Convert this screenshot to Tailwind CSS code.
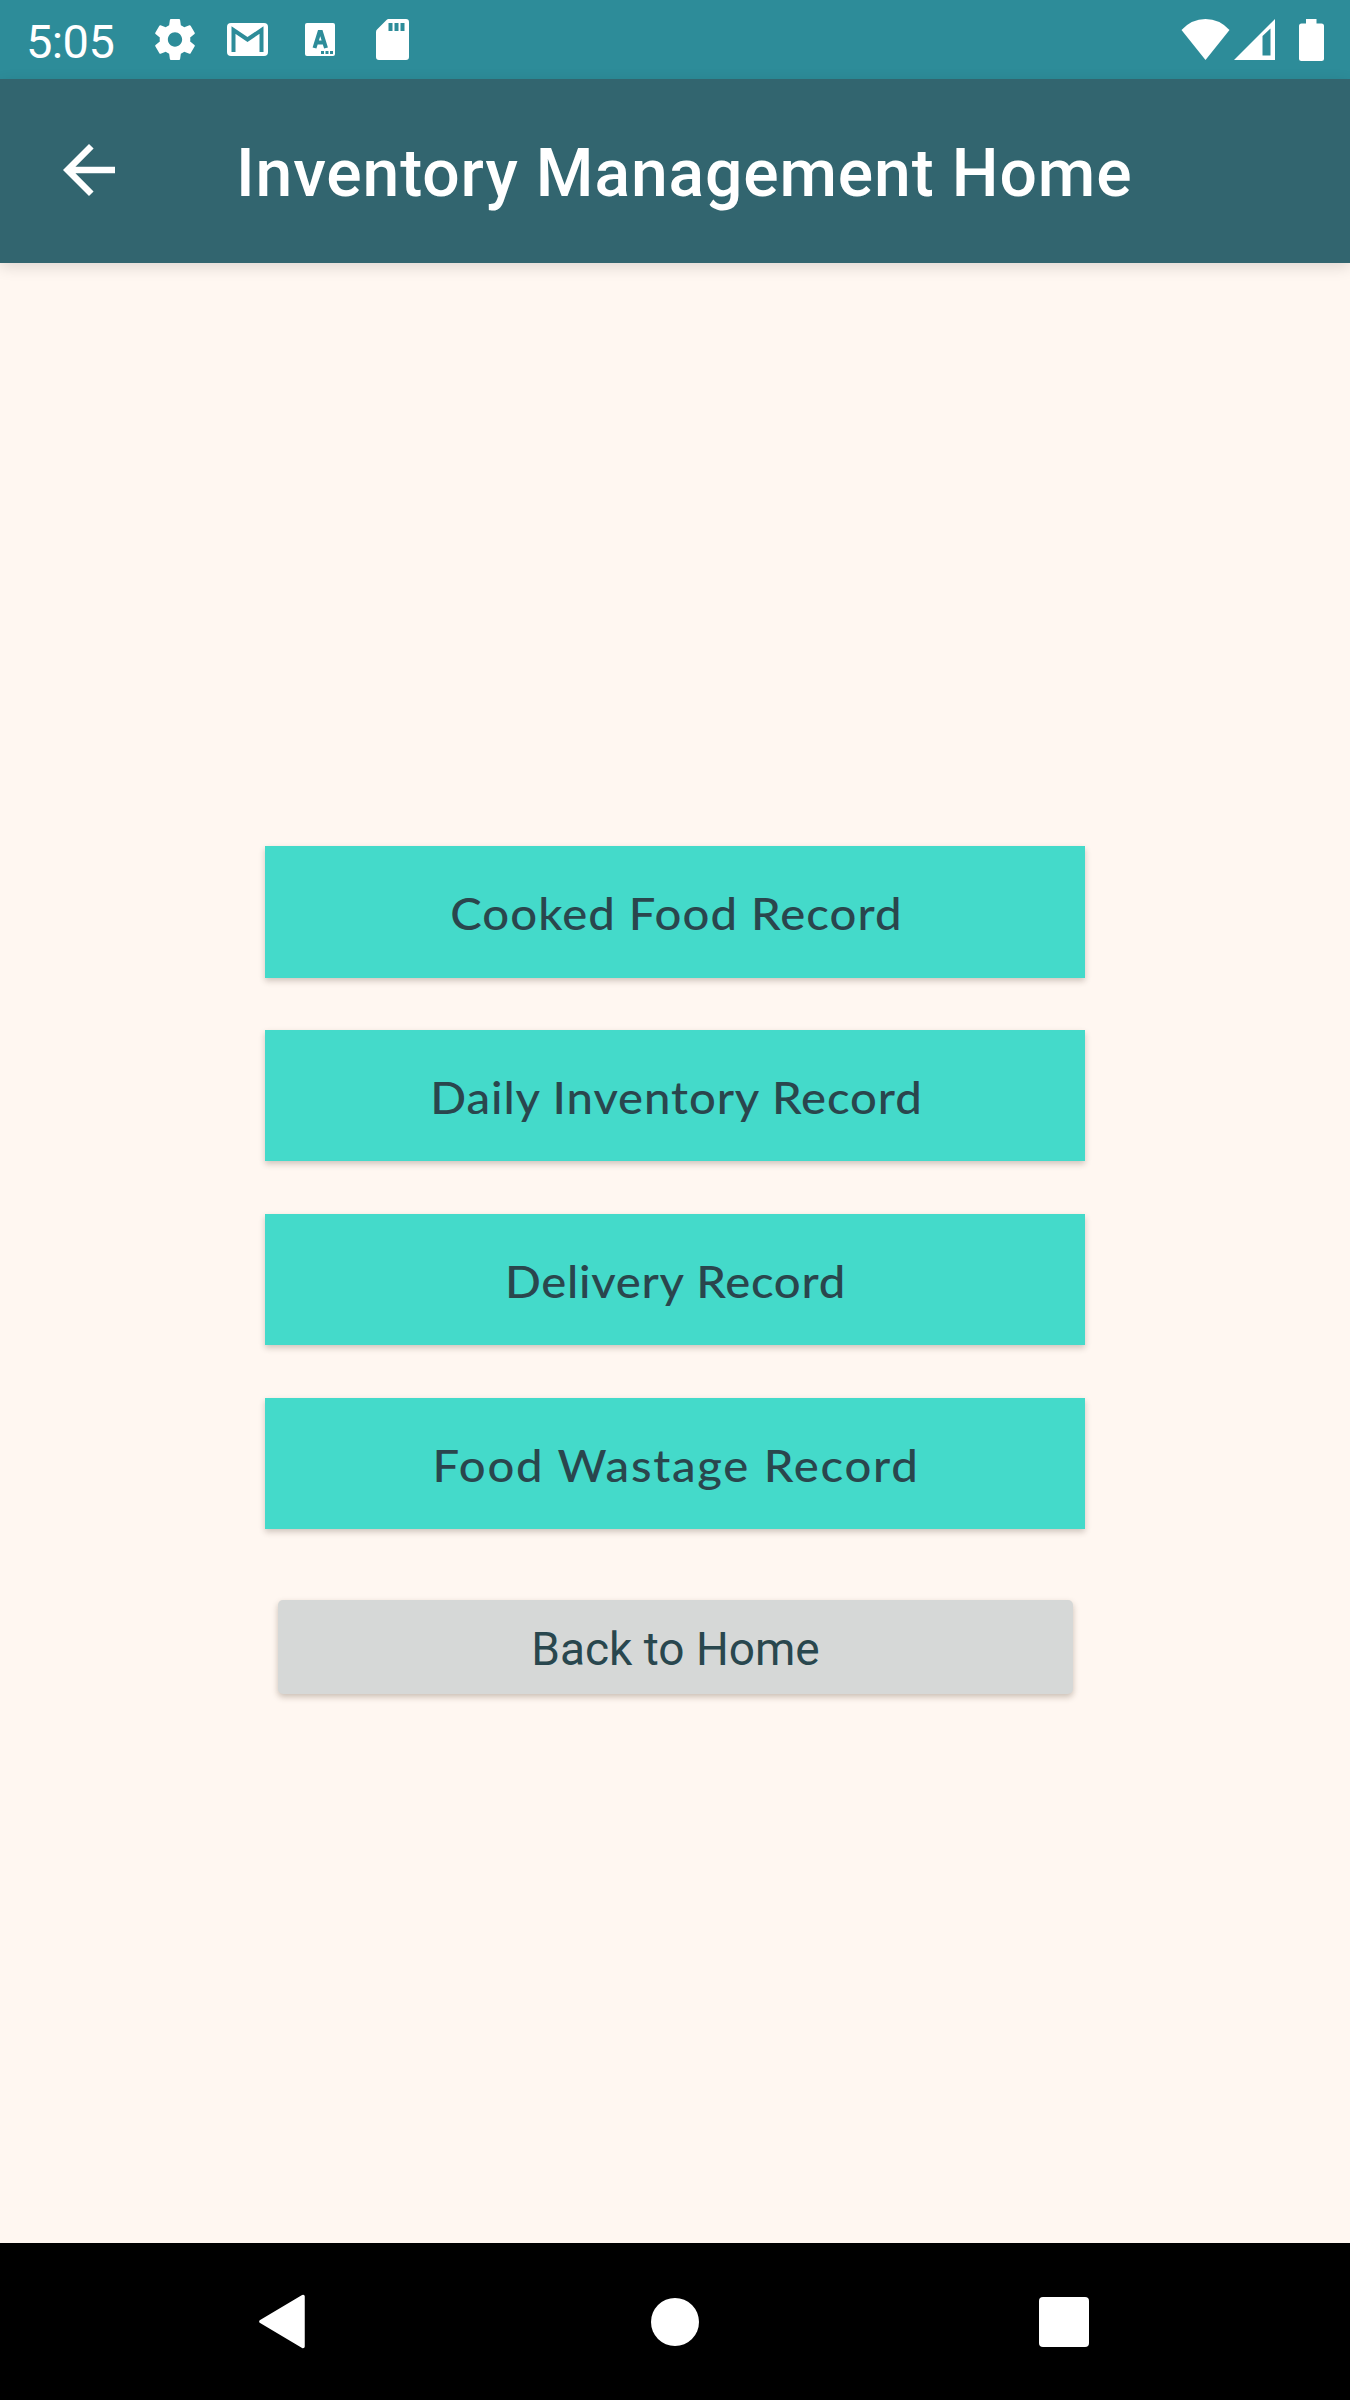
<!DOCTYPE html>
<html lang="en">
<head>
<meta charset="utf-8">
<title>Inventory Management Home</title>
<script src="https://cdn.jsdelivr.net/npm/@tailwindcss/browser@4"></script>
</head>
<body class="bg-[#fff7f1]">
<div class="flex h-[2400px] w-[1350px] flex-col overflow-hidden bg-[#fff7f1] font-[Roboto,sans-serif]">

  <!-- Status bar -->
  <header class="flex h-[79px] shrink-0 items-center bg-[#2d8c99] pr-[26px] pl-[26px] text-white">
    <span class="w-[129px] pt-[3px] text-[47px] leading-none tracking-[-0.6px]">5:05</span>
    <svg class="mr-[32px] h-[41px] w-[40px]" viewBox="2.2 2 19.6 20" preserveAspectRatio="none" fill="currentColor"><path d="M19.43 12.98c.04-.32.07-.64.07-.98s-.03-.66-.07-.98l2.11-1.65c.19-.15.24-.42.12-.64l-2-3.46c-.12-.22-.39-.3-.61-.22l-2.49 1c-.52-.4-1.08-.73-1.69-.98l-.38-2.65C14.46 2.18 14.25 2 14 2h-4c-.25 0-.46.18-.49.42l-.38 2.65c-.61.25-1.17.59-1.69.98l-2.49-1c-.23-.09-.49 0-.61.22l-2 3.46c-.13.22-.07.49.12.64l2.11 1.65c-.04.32-.07.65-.07.98s.03.66.07.98l-2.11 1.65c-.19.15-.24.42-.12.64l2 3.46c.12.22.39.3.61.22l2.49-1c.52.4 1.08.73 1.69.98l.38 2.65c.03.24.24.42.49.42h4c.25 0 .46-.18.49-.42l.38-2.65c.61-.25 1.17-.59 1.69-.98l2.49 1c.23.09.49 0 .61-.22l2-3.46c.12-.22.07-.49-.12-.64l-2.11-1.65zM12 15.5c-1.93 0-3.5-1.57-3.5-3.5s1.57-3.5 3.5-3.5 3.5 1.57 3.5 3.5-1.57 3.5-3.5 3.5z"/></svg>
    <svg class="mr-[37px] h-[33px] w-[41px]" viewBox="0 0 41 33"><rect width="41" height="33" rx="4" fill="#fff"/><path d="M6.500 29V7L20.500 16.500 34.500 7V29" fill="none" stroke="#2d8c99" stroke-width="4"/></svg>
    <svg class="mr-[41px] h-[33px] w-[30px]" viewBox="0 0 30 33"><rect width="30" height="33" rx="2" fill="#fff"/><path d="M9.500 25L14.500 9H16L21 25M11 19.500H19.500" fill="none" stroke="#2d8c99" stroke-width="4"/><path d="M16 28h3v3h-3zM20.500 28h3v3h-3zM25 28h3v3h-3z" fill="#2d8c99"/></svg>
    <svg class="h-[41px] w-[33px]" viewBox="0 0 33 41"><path d="M12.500 0H30q3 0 3 3V38q0 3-3 3H3q-3 0-3-3V13Q0 11 1.500 10L10.500 1Q11.500 0 12.500 0Z" fill="#fff"/><path d="M12.500 4h4v8h-4zM18.500 4h4v8h-4zM24.500 4h4v8h-4z" fill="#2d8c99"/></svg>
    <svg class="ml-auto h-[41px] w-[49px]" viewBox="0 0 49 41" fill="currentColor"><path d="M24.500 41L0.500 11Q10.500 0 24.500 0T48.500 11Z"/></svg>
    <svg class="ml-[4px] h-[41px] w-[41px]" viewBox="0 0 41 41" fill="currentColor"><path fill-rule="evenodd" d="M0 41L41 0V41ZM28.500 17V36.500H36.500V9.500Z"/></svg>
    <svg class="ml-[24px] h-[42px] w-[25px]" viewBox="0 0 25 42" fill="currentColor"><path d="M7 0H17.500V4.500H22.500Q25 4.500 25 7V39.500Q25 42 22.500 42H2.500Q0 42 0 39.500V7Q0 4.500 2.500 4.500H7Z"/></svg>
  </header>

  <!-- App bar -->
  <nav class="z-10 flex h-[184px] shrink-0 items-center bg-[#32656f] pl-[49.500px] text-white shadow-[0_4px_14px_rgba(0,0,0,0.13)]">
    <svg class="mb-[2px] h-[78px] w-[78px]" viewBox="0 0 24 24" fill="currentColor"><path d="M20 11H7.830l5.590-5.590L12 4l-8 8 8 8 1.410-1.410L7.830 13H20v-2z"/></svg>
    <h1 class="pt-[5px] pl-[108.500px] text-[66px] leading-none font-medium tracking-[0.87px] whitespace-nowrap">Inventory Management Home</h1>
  </nav>

  <!-- Menu -->
  <main class="flex grow flex-col items-center pt-[583px] font-[Lato,sans-serif] text-[45px] leading-none font-medium text-[#2a464d]">
    <button class="mb-[52px] flex h-[132px] w-[820px] items-center justify-center bg-[#44daca] pt-[2px] pl-[2px] tracking-[1px] shadow-[0_3px_6px_rgba(60,40,30,0.24)]"><span class="scale-x-105">Cooked Food Record</span></button>
    <button class="mb-[53px] flex h-[131px] w-[820px] items-center justify-center bg-[#44daca] pt-[4px] pl-[2px] tracking-[0.85px] shadow-[0_3px_6px_rgba(60,40,30,0.24)]"><span class="scale-x-105">Daily Inventory Record</span></button>
    <button class="mb-[53px] flex h-[131px] w-[820px] items-center justify-center bg-[#44daca] pt-[4px] pl-[1px] tracking-[0.69px] shadow-[0_3px_6px_rgba(60,40,30,0.24)]"><span class="scale-x-105">Delivery Record</span></button>
    <button class="mb-[71px] flex h-[131px] w-[820px] items-center justify-center bg-[#44daca] pt-[3px] pl-[1px] tracking-[1.65px] shadow-[0_3px_6px_rgba(60,40,30,0.24)]"><span class="scale-x-105">Food Wastage Record</span></button>
    <button class="flex h-[94px] w-[795px] items-center justify-center rounded-[5px] bg-[#d6d8d7] pt-[4px] pl-[1px] font-[Roboto,sans-serif] text-[46px] font-normal text-[#29474e] shadow-[0_3px_6px_rgba(60,40,20,0.27)]">Back to Home</button>
  </main>

  <!-- System navigation -->
  <footer class="flex h-[157px] shrink-0 items-center bg-black pl-[259px] text-white">
    <svg class="h-[55px] w-[46px]" viewBox="0 0 46 55"><path d="M2 27.500L44 2.500V52.500Z" fill="#fff" stroke="#fff" stroke-width="3.500" stroke-linejoin="round"/></svg>
    <span class="ml-[346px] size-[48px] rounded-full bg-white"></span>
    <span class="ml-[340px] size-[50px] rounded-[4px] bg-white"></span>
  </footer>
</div>
</body>
</html>
